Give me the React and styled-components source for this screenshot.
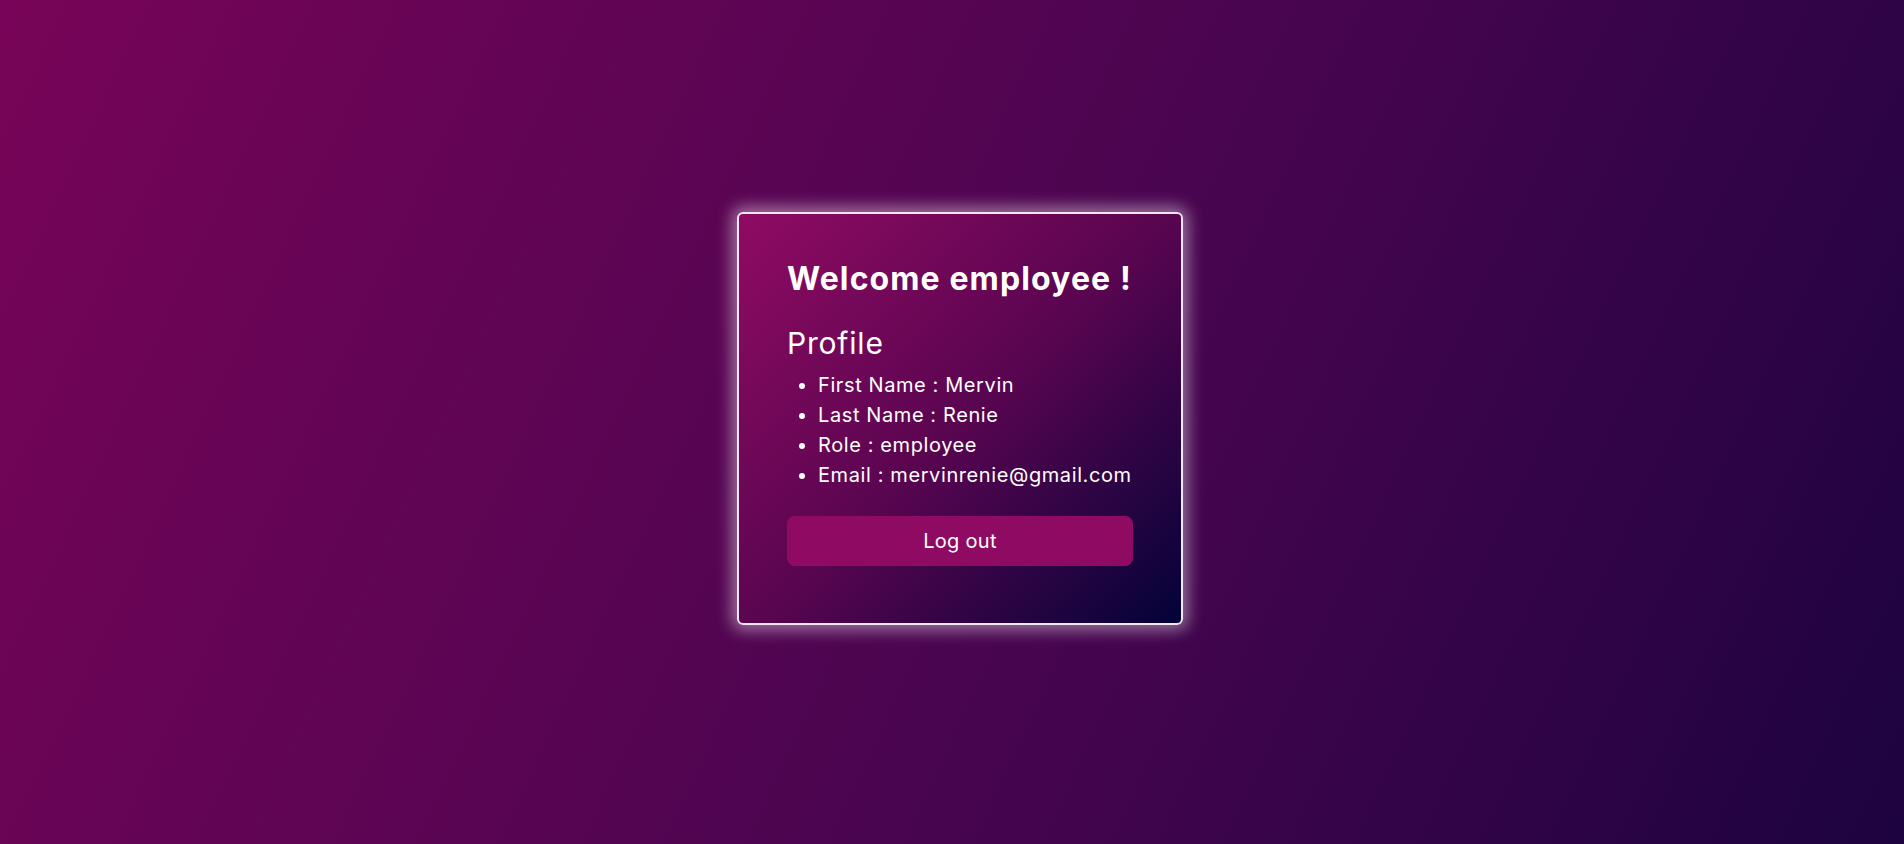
import React from "react";
import styled, { createGlobalStyle } from "styled-components";

const Global = createGlobalStyle`
  html, body { margin: 0; padding: 0; }
  body {
    font-family: "Inter", "Noto Sans", sans-serif;
    color: #ffffff;
  }
`;

const Page = styled.div`
  min-height: 100vh;
  box-sizing: border-box;
  padding-left: 16px;
  display: flex;
  align-items: center;
  justify-content: center;
  background: linear-gradient(115deg, #780458 0%, #4a0550 55%, #1d0340 100%);
`;

const Card = styled.div`
  box-sizing: border-box;
  width: 446px;
  border: 2px solid #f2e6f0;
  border-radius: 6px;
  padding: 45px 48px 57px 48px;
  background: linear-gradient(135deg, #8f0b63 0%, #5a0550 50%, #030338 100%);
  box-shadow: 0 0 16px 5px rgba(255, 255, 255, 0.45);
  display: flex;
  flex-direction: column;
  margin-top: -7px;
`;

const Title = styled.h1`
  margin: 0;
  font-size: 32px;
  line-height: 40px;
  font-weight: 700;
  letter-spacing: 1.1px;
  white-space: nowrap;
`;

const Heading = styled.h2`
  margin: 24px 0 0 0;
  font-size: 30px;
  line-height: 40px;
  font-weight: 400;
  letter-spacing: 0.8px;
`;

const List = styled.ul`
  margin: 7px 0 0 0;
  padding-left: 31px;
  list-style: disc;
`;

const Item = styled.li`
  font-size: 20px;
  line-height: 30px;
  letter-spacing: 0.6px;
  white-space: nowrap;
`;

const Button = styled.button`
  margin-top: 26px;
  height: 50px;
  border: none;
  border-radius: 8px;
  background: #8f0a62;
  color: #ffffff;
  font-family: inherit;
  font-size: 20px;
  letter-spacing: 0.3px;
  cursor: pointer;
`;

export default function App() {
  return (
    <>
      <Global />
      <Page>
        <Card>
          <Title>Welcome employee !</Title>
          <Heading>Profile</Heading>
          <List>
            <Item>First Name : Mervin</Item>
            <Item>Last Name : Renie</Item>
            <Item>Role : employee</Item>
            <Item>Email : mervinrenie@gmail.com</Item>
          </List>
          <Button>Log out</Button>
        </Card>
      </Page>
    </>
  );
}
